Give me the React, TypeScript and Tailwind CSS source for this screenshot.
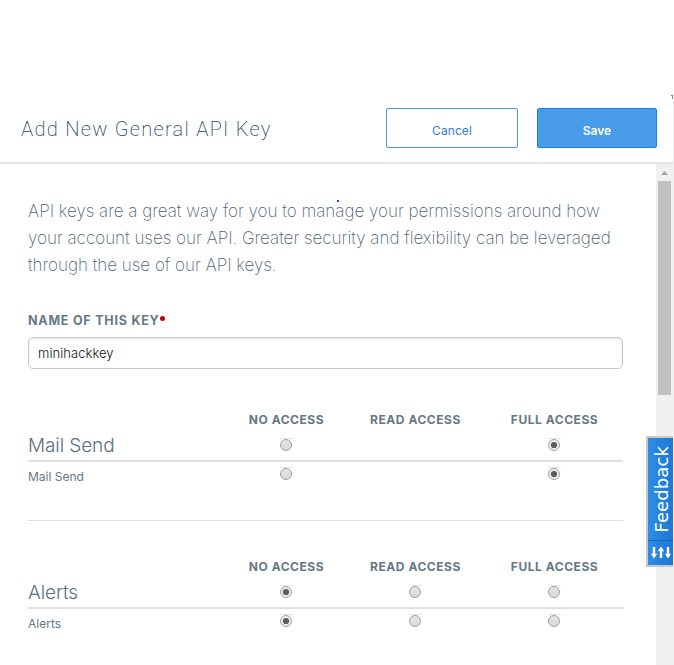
import React from "react";

type Access = "none" | "read" | "full";

function Radio({ on }: { on: boolean }) {
  return (
    <svg width="14" height="14" viewBox="0 0 14 14" className="block">
      <defs>
        <linearGradient id="knob" x1="0" y1="0" x2="0" y2="1">
          <stop offset="0" stopColor="#e6e6e6" />
          <stop offset="1" stopColor="#d8d8d8" />
        </linearGradient>
      </defs>
      <path d="M1 .5H14" stroke="#e4e4e4" />
      <circle cx="7" cy="7" r="5.5" fill={on ? "#ececec" : "url(#knob)"} stroke="#a3a3a3" />
      {on && <circle cx="7" cy="7" r="3.1" fill="#5c5c5c" />}
    </svg>
  );
}

function Heading({ children }: { children: string }) {
  return (
    <span className="whitespace-nowrap pt-px pl-px text-[12px] leading-4 font-bold tracking-[0.54px] text-[#667885]">
      {children}
    </span>
  );
}

const cols = "grid grid-cols-[194px_128px_130px_143px]";

function Choices({ value, read }: { value: Access; read: boolean }) {
  return (
    <>
      <div className="flex justify-center pt-[3px]">
        <Radio on={value === "none"} />
      </div>
      <div className="flex justify-center pt-[3px]">{read && <Radio on={value === "read"} />}</div>
      <div className="flex justify-center pt-[3px] pl-[5px]">
        <Radio on={value === "full"} />
      </div>
    </>
  );
}

function Scope({ name, value, read }: { name: string; value: Access; read: boolean }) {
  return (
    <section>
      <div className={`${cols} h-[24px]`}>
        <div />
        <div className="flex justify-center"><Heading>NO ACCESS</Heading></div>
        <div className="flex justify-center"><Heading>READ ACCESS</Heading></div>
        <div className="flex justify-center pl-[5px]"><Heading>FULL ACCESS</Heading></div>
      </div>
      <div className={`${cols} h-[27px] border-b-2 border-[#dfe0e0]`}>
        <h2 className="text-[19px] leading-[22px] font-light tracking-[-0.1px] text-[#5b7080]">{name}</h2>
        <Choices value={value} read={read} />
      </div>
      <div className={`${cols} h-[29px] pt-[2px]`}>
        <div className="pt-[5px] text-[12px] leading-4 text-[#667885]">{name}</div>
        <Choices value={value} read={read} />
      </div>
    </section>
  );
}

export default function App() {
  return (
    <div className="relative flex h-[665px] w-[674px] flex-col overflow-hidden bg-white font-['Inter','Liberation_Sans',sans-serif]">
      <header className="flex h-[164px] w-[673px] shrink-0 items-start border-b-2 border-[#e4e4e4] pt-[108px] pl-[21px]">
        <h1 className="w-[365px] whitespace-nowrap font-['Roboto',sans-serif] text-[20px] leading-[42px] font-extralight tracking-[1.3px] text-[#294661]">
          Add New General API Key
        </h1>
        <button className="h-10 w-[132px] rounded-[2px] border border-[#4a9ae6] pt-[5px] text-[12px] tracking-[0.1px] text-[#377be0]">
          Cancel
        </button>
        <button className="ml-[19px] h-10 w-[120px] rounded-[2px] border border-[#1a82e2] bg-[#489be8] pt-[5px] text-[12px] font-semibold text-white">
          Save
        </button>
      </header>
      <div className="flex min-h-0 flex-1">
        <main className="w-[656px] overflow-hidden pt-[34px] pl-[28px]">
          <p className="text-[17px] leading-[27px] font-extralight tracking-[-0.01px] whitespace-nowrap text-[#4f6475]">
            API keys are a great way for you to manage your permissions around how
            <br />
            your account uses our API. Greater security and flexibility can be leveraged
            <br />
            through the use of our API keys.
          </p>
          <label className="mt-[33px] flex h-4 text-[12.5px] leading-[17px] font-bold tracking-[0.78px] text-[#667885]">
            NAME OF THIS KEY
            <span className="mt-[4px] size-[5px] rounded-full bg-[#c00]" />
          </label>
          <div className="mt-[9px] h-8 w-[595px] rounded-[5px] border border-[#c8c8c8] pl-[9px] text-[13px] leading-[31px] font-light tracking-[0.05px] text-[#111] shadow-[inset_0_1px_2px_#ddd]">
            minihackkey
          </div>
          <div className="mt-[42px] w-[595px]">
            <Scope name="Mail Send" value="full" read={false} />
            <hr className="mt-[29px] mb-[37px] border-[#dedede]" />
            <Scope name="Alerts" value="none" read />
          </div>
        </main>
        <aside className="flex w-[18px] flex-col items-center bg-[#f0f0f0] pr-[3px] pl-[2px]">
          <svg width="13" height="17" viewBox="0 0 13 17" className="block">
            <path d="M3 11L6.5 7L10 11Z" fill="#a3a3a3" />
          </svg>
          <div className="h-[214px] w-[13px] bg-[#c1c1c1]" />
        </aside>
      </div>
      <div className="absolute top-[97px] right-0 h-[67px] w-px bg-[#eee]" />
      <div className="absolute top-[95px] left-[671px] h-px w-[2px] bg-[#777]" />
      <div className="absolute top-[96px] left-[672px] h-[3px] w-px bg-[#888]" />
      <div className="absolute top-[200px] left-[337px] size-[2px] bg-[#3a3af0]" />
      <div className="absolute top-[436px] left-[646px] flex h-[131px] w-[27px] flex-col border-y-2 border-l-2 border-[#c8c8c8] bg-linear-to-r from-[#2f8de6] to-[#1b78d3]">
        <div className="flex h-[103px] items-center justify-center border-b border-[#1767b5] pl-[2px]">
          <span className="rotate-180 font-['DejaVu_Sans',sans-serif] text-[18px] leading-[22px] tracking-[0.1px] text-white [writing-mode:vertical-rl]">
            Feedback
          </span>
        </div>
        <svg width="25" height="24" viewBox="0 0 25 24" fill="none" stroke="#fff" strokeWidth="2.4">
          <path d="M6 6V15M13 17V8M20 6V15" />
          <path d="M2.800 12.800H9.200L6 17.500ZM9.800 10.200H16.200L13 5.500ZM16.800 12.800H23.200L20 17.500Z" fill="#fff" stroke="none" />
        </svg>
      </div>
    </div>
  );
}
